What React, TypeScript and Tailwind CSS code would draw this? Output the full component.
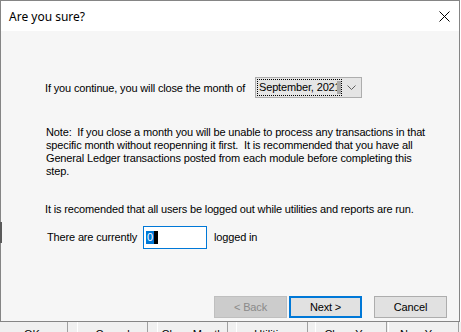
import React from "react";

export default function App() {
  const btnBase =
    "h-[22px] w-[73px] flex items-center justify-center text-[11px] leading-[13px]";
  const under = [
    { label: "OK", cls: "ml-[-4px] w-[72px]" },
    { label: "Cancel", cls: "ml-[9px] w-[71px]" },
    { label: "Close Month", cls: "ml-[9px] w-[71px]" },
    { label: "Utilities", cls: "ml-[8px] w-[72px]" },
    { label: "Close Year", cls: "ml-[7px] w-[72px]" },
    { label: "New Year", cls: "ml-[1px] w-[71px]" },
  ];
  return (
    <div className="relative w-[461px] h-[332px] bg-white overflow-hidden font-['Liberation_Sans',Arial,sans-serif] text-black">
      <div className="w-[460px] h-[322px] border border-[#858585] flex flex-col">
        {/* Title bar */}
        <div className="h-[30px] bg-white flex items-center justify-between pl-[8px] pr-[9px] shrink-0">
          <span className="font-['Noto_Sans',sans-serif] text-[12px] leading-[16px] pt-[1px] text-black">
            Are you sure?
          </span>
          <svg width="11" height="11" viewBox="0 0 11 11" className="block">
            <path d="M0.5 0.5 L10.5 10.5 M10.5 0.5 L0.5 10.5" stroke="#000" strokeWidth="1" fill="none" />
          </svg>
        </div>
        {/* Body */}
        <div className="flex-1 bg-[#f6f6f6] flex flex-col pl-[44px] text-[11px] leading-[13px] tracking-[-0.15px]">
          <div className="mt-[46px] h-[21px] flex items-center">
            <span className="w-[210px] whitespace-nowrap pt-[1px]">
              If you continue, you will close the month of
            </span>
            <div className="w-[107px] h-[21px] border border-[#adadad] bg-[#e5e5e5] flex items-center">
              <div className="relative ml-[1px] w-[85px] h-[17px] border border-dotted border-black flex items-center pl-[1px] overflow-hidden">
                <span className="whitespace-nowrap">September, 2021</span>
                <span className="absolute right-0 top-[1px] w-[4px] h-[13px] bg-[#a8a8a8]" />
              </div>
              <svg width="9" height="6" viewBox="0 0 9 6" className="ml-[5px] block">
                <path d="M0.5 0.5 L4.5 4.5 L8.5 0.5" stroke="#5f5f5f" strokeWidth="1" fill="none" />
              </svg>
            </div>
          </div>

          <div className="mt-[28px] pl-[1px] whitespace-pre">
            <div>Note:  If you close a month you will be unable to process any transactions in that</div>
            <div>specific month without reopenning it first.  It is recommended that you have all</div>
            <div>General Ledger transactions posted from each module before completing this</div>
            <div>step.</div>
          </div>

          <div className="mt-[25px] whitespace-nowrap">
            It is recomended that all users be logged out while utilities and reports are run.
          </div>

          <div className="mt-[10px] h-[23px] flex items-center pl-[2px]">
            <span className="w-[96px] whitespace-nowrap">There are currently</span>
            <div className="w-[64px] h-[23px] border border-[#0078d7] bg-white flex items-center pl-[2px]">
              <span className="bg-[#0078d7] text-white px-[1px] h-[13px] leading-[13px]">0</span>
              <span className="w-[4px] h-[13px] bg-black" />
            </div>
            <span className="ml-[7px] whitespace-nowrap">logged in</span>
          </div>

          <div className="mt-[47px] flex ml-[169px]">
            <div className={`${btnBase} bg-[#cccccc] border border-[#bfbfbf] text-[#8a8a8a]`}>&lt; Back</div>
            <div className={`${btnBase} ml-[2px] bg-[#e1e1e1] border-2 border-[#0078d7]`}>Next &gt;</div>
            <div className={`${btnBase} ml-[12px] bg-[#e1e1e1] border border-[#adadad]`}>Cancel</div>
          </div>
        </div>
      </div>
      {/* Underlying window strip */}
      <div className="h-[10px] bg-[#f0f0f0] overflow-hidden flex text-[11px] leading-[13px]">
        {under.map((u) => (
          <div
            key={u.label}
            className={`${u.cls} shrink-0 h-[16px] border-l border-r border-l-white border-r-[#a0a0a0] bg-[#f0f0f0] flex justify-center pt-[6px] whitespace-nowrap`}
          >
            {u.label}
          </div>
        ))}
      </div>
      <div className="absolute left-0 top-[222px] w-[2px] h-[21px] bg-[#5a5a5a]" />
    </div>
  );
}
